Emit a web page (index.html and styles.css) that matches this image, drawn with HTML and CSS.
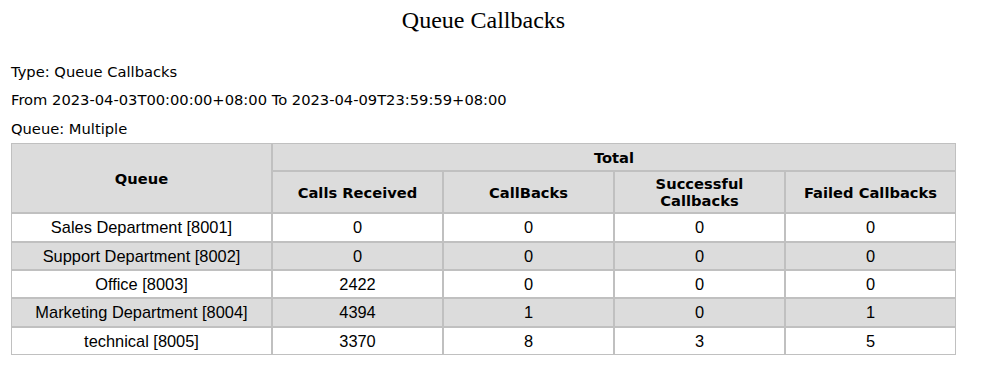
FILE: index.html
```html
<!DOCTYPE html>
<html>
<head>
<meta charset="utf-8">
<link rel="stylesheet" href="styles.css">
</head>
<body>
<div class="report">
  <div class="title">Queue Callbacks</div>
  <div class="meta">
    <div class="meta-line">Type: Queue Callbacks</div>
    <div class="meta-line">From 2023-04-03T00:00:00+08:00 To 2023-04-09T23:59:59+08:00</div>
    <div class="meta-line">Queue: Multiple</div>
  </div>
  <table class="data">
    <colgroup>
      <col class="c-queue"><col class="c-num"><col class="c-num"><col class="c-num"><col class="c-num">
    </colgroup>
    <thead>
      <tr class="h1row"><th rowspan="2">Queue</th><th colspan="4">Total</th></tr>
      <tr class="h2row"><th>Calls Received</th><th>CallBacks</th><th>Successful<br>Callbacks</th><th>Failed Callbacks</th></tr>
    </thead>
    <tbody>
      <tr><td>Sales Department [8001]</td><td>0</td><td>0</td><td>0</td><td>0</td></tr>
      <tr class="alt"><td>Support Department [8002]</td><td>0</td><td>0</td><td>0</td><td>0</td></tr>
      <tr><td>Office [8003]</td><td>2422</td><td>0</td><td>0</td><td>0</td></tr>
      <tr class="alt"><td>Marketing Department [8004]</td><td>4394</td><td>1</td><td>0</td><td>1</td></tr>
      <tr><td>technical [8005]</td><td>3370</td><td>8</td><td>3</td><td>5</td></tr>
    </tbody>
  </table>
</div>
</body>
</html>
```
FILE: styles.css
```css
html, body {
  margin: 0;
  padding: 0;
  background: #ffffff;
  color: #000000;
}
.report {
  width: 945px;
  padding: 6px 11px 0 11px;
}
.title {
  font-family: "Liberation Serif", "Times New Roman", serif;
  font-size: 24px;
  line-height: 28px;
  text-align: center;
  margin-bottom: 24px;
}
.meta {
  font-family: "DejaVu Sans", Verdana, sans-serif;
  font-size: 14.7px;
}
.meta-line {
  line-height: 28.4px;
}
.data {
  border-collapse: separate;
  border-spacing: 0;
  width: 945px;
  table-layout: fixed;
  margin-top: 0;
}
.c-queue { width: 261px; }
.c-num { width: 171px; }
.data th, .data td {
  border: 1px solid #c0c0c0;
  text-align: center;
  vertical-align: middle;
}
.data th {
  background: #dcdcdc;
  font-family: "DejaVu Sans", Verdana, sans-serif;
  font-weight: bold;
  font-size: 14.7px;
  line-height: 17px;
  padding: 3px 4px;
}
.h1row th { height: 20px; }
.data td {
  font-family: "Liberation Sans", Arial, sans-serif;
  font-size: 16.4px;
  line-height: 18.4px;
  padding: 4px 4px;
  background: #ffffff;
}
.data tr.alt td {
  background: #dcdcdc;
}
```
